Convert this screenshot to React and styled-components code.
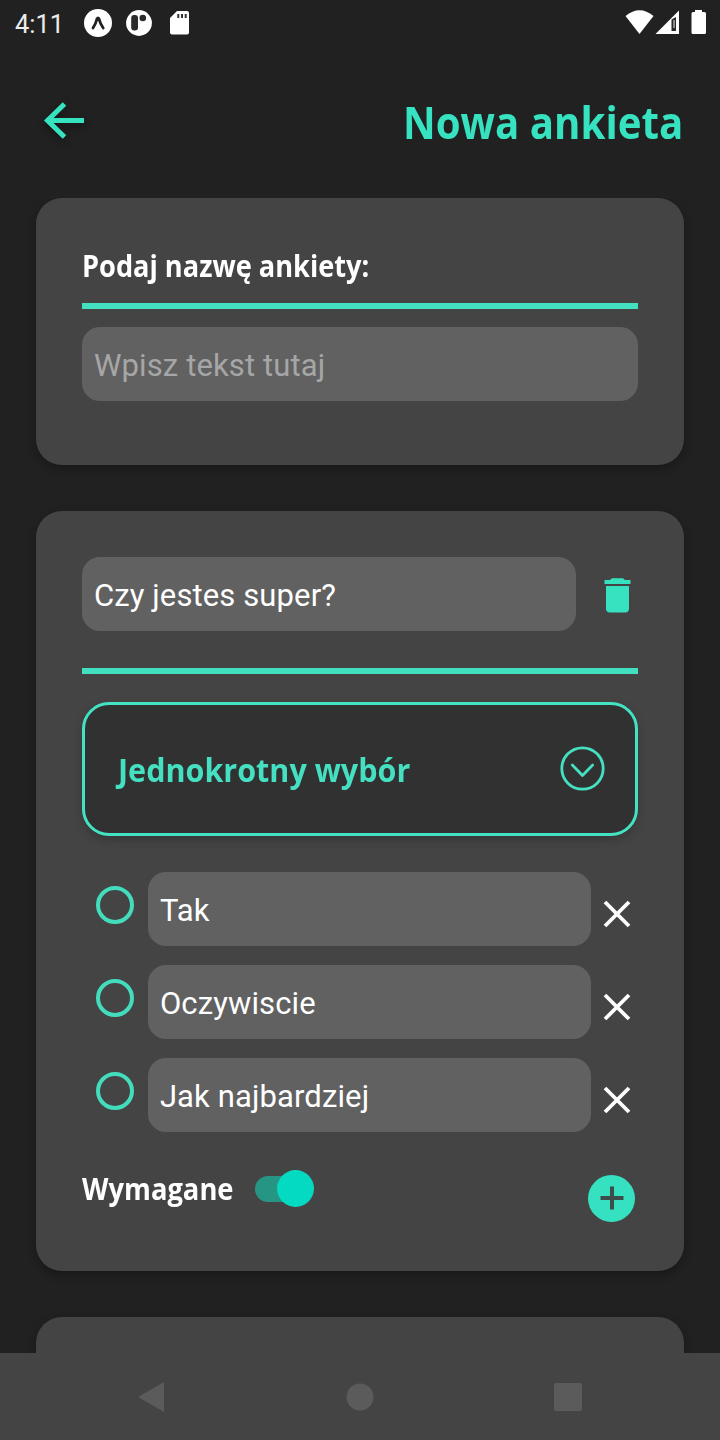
import React from "react";
import styled, { createGlobalStyle } from "styled-components";

const accent = "#36e2c0";

const GlobalStyle = createGlobalStyle`
  * { box-sizing: border-box; }
  body { margin: 0; background: #212121; overflow: hidden; }
`;

const Screen = styled.div`
  width: 720px;
  height: 1440px;
  display: flex;
  flex-direction: column;
  overflow: hidden;
  background: #212121;
  font-family: Roboto, sans-serif;
`;

const StatusBar = styled.div`
  height: 46px;
  flex: none;
  display: flex;
  align-items: center;
  justify-content: space-between;
  padding: 0 12px 0 15px;
  color: #fff;
`;

const StatusGroup = styled.div`
  display: flex;
  align-items: center;
`;

const Clock = styled.span`
  width: 69px;
  font-size: 25.5px;
  line-height: 46px;
  padding-top: 1px;
  color: #ececec;
`;

const Header = styled.header`
  height: 152px;
  flex: none;
  display: flex;
  justify-content: space-between;
  padding: 52px 37px 0 40px;
`;

const BackButton = styled.button`
  width: 48px;
  height: 46px;
  border: 0;
  padding: 0;
  background: none;
  filter: drop-shadow(0 3px 4px rgba(0, 0, 0, 0.45));
`;

const Heading = styled.h2`
  flex: none;
  width: ${(p) => p.$width}px;
  margin: 0;
  font-family: "Open Sans", "Noto Sans", sans-serif;
  font-weight: 700;
  font-size: ${(p) => p.$size}px;
  line-height: ${(p) => p.$line}px;
  color: ${(p) => p.$color || "#fff"};
  white-space: nowrap;
  transform: scaleX(${(p) => p.$condense});
  transform-origin: left center;
`;

const Content = styled.main`
  flex: 1;
  min-height: 0;
  overflow: hidden;
  display: flex;
  flex-direction: column;
  gap: 46px;
  padding: 0 35.6px 0 36.4px;
`;

const Card = styled.section`
  flex: none;
  height: ${(p) => p.$height}px;
  padding: 46px;
  border-radius: 26px;
  background: #444;
  box-shadow: 0 4px 10px rgba(0, 0, 0, 0.28);
`;

const Divider = styled.div`
  height: 5.5px;
  margin: ${(p) => p.$margin};
  background: #42dfc1;
`;

const Field = styled.div`
  flex: 1;
  height: 74px;
  padding: 2px 11.5px 0;
  border-radius: 18px;
  background: #616161;
  color: ${(p) => (p.$muted ? "#a6a6a6" : "#fff")};
  font-size: 31px;
  letter-spacing: 0.12px;
  line-height: 74px;
  white-space: nowrap;
`;

const QuestionRow = styled.div`
  display: flex;
  align-items: center;
`;

const IconButton = styled.button`
  display: flex;
  align-items: center;
  justify-content: center;
  border: 0;
  padding: 0;
  background: none;
  width: ${(p) => p.$width}px;
  height: ${(p) => p.$height}px;
  margin: ${(p) => p.$margin || 0};
`;

const Select = styled.div`
  display: flex;
  align-items: center;
  justify-content: space-between;
  height: 134px;
  padding: 0 30.5px 0 33px;
  border: 3px solid #42e2c3;
  border-radius: 27px;
  background: #313131;
  box-shadow: 0 4px 10px rgba(0, 0, 0, 0.2);
`;

const SelectLabel = styled(Heading)`
  padding-top: 2px;
`;

const Options = styled.div`
  display: flex;
  flex-direction: column;
  gap: 19px;
  margin-top: 36px;
`;

const OptionRow = styled.div`
  display: flex;
  align-items: center;
  height: 74px;
  padding-left: 14px;
`;

const Radio = styled.div`
  width: 38px;
  height: 38px;
  margin: 0 14px 7px 0;
  border: 4px solid #43dcbc;
  border-radius: 50%;
`;

const Footer = styled.div`
  display: flex;
  align-items: flex-start;
  justify-content: space-between;
  margin-top: 37px;
`;

const Required = styled.div`
  display: flex;
  align-items: center;
  gap: 22px;
  height: 40px;
`;

const Toggle = styled.div`
  display: flex;
  align-items: center;
  justify-content: flex-end;
  width: 59px;
  height: 26px;
  background: linear-gradient(90deg, #269583 44px, transparent 44px);
  border-radius: 13px;
`;

const Thumb = styled.div`
  flex: none;
  width: 37px;
  height: 37px;
  border-radius: 50%;
  background: #04d9c2;
`;

const AddButton = styled.button`
  display: flex;
  align-items: center;
  justify-content: center;
  width: 47px;
  height: 47px;
  margin: 6px 3px 0 0;
  padding: 0;
  border: 0;
  border-radius: 50%;
  background: #36e1c2;
`;

const NavBar = styled.nav`
  flex: none;
  height: 87px;
  display: flex;
  align-items: center;
  justify-content: space-between;
  padding: 0 138px;
  background: #444;
`;

const HomeIcon = styled.svg`
  margin-left: 2px;
`;

const BackIcon = () => (
  <svg width="48" height="46" viewBox="0 0 48 46" fill="none" stroke={accent} strokeWidth="5">
    <path d="M44 22.5H8M24.5 6L7.5 22.5L24.5 39" />
  </svg>
);

const TrashIcon = () => (
  <svg width="27" height="35" viewBox="0 0 27 35" fill={accent}>
    <path d="M0.5 2H6L8 .2H19L21 2H26.5V6H.5Z" />
    <path d="M2 8H25V30.5Q25 34.5 21 34.5H6Q2 34.5 2 30.5Z" />
  </svg>
);

const ChevronCircle = () => (
  <svg width="45" height="45" viewBox="0 0 45 45" fill="none" stroke="#45dfc1" strokeWidth="2.8">
    <circle cx="22.5" cy="22.5" r="20.7" />
    <path d="M12.3 19L22.5 29.5L32.7 19" strokeLinecap="round" strokeLinejoin="round" />
  </svg>
);

const CloseIcon = () => (
  <svg width="28" height="28" viewBox="0 0 28 28" stroke="#fff" strokeWidth="3.8">
    <path d="M2 2L26 26M26 2L2 26" />
  </svg>
);

const NotificationIcons = () => (
  <svg width="112" height="32" viewBox="84 7 112 32">
    <circle cx="98" cy="23" r="14" fill="#fff" />
    <path
      d="M93 28Q95.8 24 97 18.8Q98 17 99 18.8Q100.3 24 103.2 28"
      fill="none"
      stroke="#212121"
      strokeWidth="2.8"
      strokeLinecap="round"
    />
    <circle cx="139" cy="23" r="12.9" fill="#fff" />
    <rect x="131.2" y="15" width="6.8" height="15.5" rx="3" fill="#2b2b2b" />
    <circle cx="142.8" cy="18" r="3.3" fill="#2b2b2b" />
    <path d="M177 11H187Q189 11 189 13V32.500Q189 34.500 187 34.500H172Q170 34.500 170 32.500V18Z" fill="#fff" />
    <path d="M178.300 14V18M182 14V18M185.700 14V18" stroke="#333" strokeWidth="2" />
  </svg>
);

const SystemIcons = () => (
  <svg width="84" height="28" viewBox="624 9 84 28" fill="#fff">
    <path d="M625.500 16Q639.500 4.500 653.500 16L639.500 34Z" />
    <path d="M655.500 34L679 10.500V34Z" />
    <path d="M671.500 19.500L676 17V31H671.500Z" fill="#2b2b2b" />
    <rect x="673.300" y="20" width="1.500" height="8" fill="#aaa" />
    <path d="M695 10H702V12H704.500Q706 12 706 13.500V32.500Q706 34 704.500 34H693Q691.500 34 691.500 32.500V13.500Q691.500 12 693 12H695Z" />
  </svg>
);

const Option = ({ label }) => (
  <OptionRow>
    <Radio />
    <Field>{label}</Field>
    <IconButton $width={28} $height={28} $margin="10px 7px 0 12px" aria-label="Usuń">
      <CloseIcon />
    </IconButton>
  </OptionRow>
);

export default function App() {
  return (
    <Screen>
      <GlobalStyle />
      <StatusBar>
        <StatusGroup>
          <Clock>4:11</Clock>
          <NotificationIcons />
        </StatusGroup>
        <SystemIcons />
      </StatusBar>
      <Header>
        <BackButton aria-label="Wstecz">
          <BackIcon />
        </BackButton>
        <Heading as="h1" $width={280} $condense={0.894} $size={45} $line={47} $color={accent}>
          Nowa ankieta
        </Heading>
      </Header>
      <Content>
        <Card $height={267}>
          <Heading $width={286} $condense={0.906} $size={30} $line={44}>
            Podaj nazwę ankiety:
          </Heading>
          <Divider $margin="15px 0 18px" />
          <Field $muted>Wpisz tekst tutaj</Field>
        </Card>
        <Card $height={760}>
          <QuestionRow>
            <Field>Czy jestes super?</Field>
            <IconButton $width={27} $height={35} $margin="2px 7px 0 28px" aria-label="Usuń pytanie">
              <TrashIcon />
            </IconButton>
          </QuestionRow>
          <Divider $margin="37px 0 28px" />
          <Select>
            <SelectLabel $width={292} $condense={0.925} $size={33} $line={44} $color="#45dfc1">
              Jednokrotny wybór
            </SelectLabel>
            <ChevronCircle />
          </Select>
          <Options>
            <Option label="Tak" />
            <Option label="Oczywiscie" />
            <Option label="Jak najbardziej" />
          </Options>
          <Footer>
            <Required>
              <Heading $width={151} $condense={0.912} $size={30} $line={42}>
                Wymagane
              </Heading>
              <Toggle>
                <Thumb />
              </Toggle>
            </Required>
            <AddButton aria-label="Dodaj">
              <svg width="24" height="24" viewBox="0 0 24 24" stroke="#3d4d4a" strokeWidth="4">
                <path d="M.5 12H23.500M12 .5V23.500" />
              </svg>
            </AddButton>
          </Footer>
        </Card>
        <Card $height={200} />
      </Content>
      <NavBar>
        <svg width="26" height="30" viewBox="0 0 27 30" fill="#5b5b5b" preserveAspectRatio="none">
          <path d="M27 0V30L0 15Z" />
        </svg>
        <HomeIcon width="28" height="28" viewBox="0 0 28 28" fill="#5b5b5b">
          <circle cx="14" cy="14" r="13.500" />
        </HomeIcon>
        <svg width="28" height="28" viewBox="0 0 28 28" fill="#5b5b5b">
          <rect width="28" height="28" rx="2" />
        </svg>
      </NavBar>
    </Screen>
  );
}
